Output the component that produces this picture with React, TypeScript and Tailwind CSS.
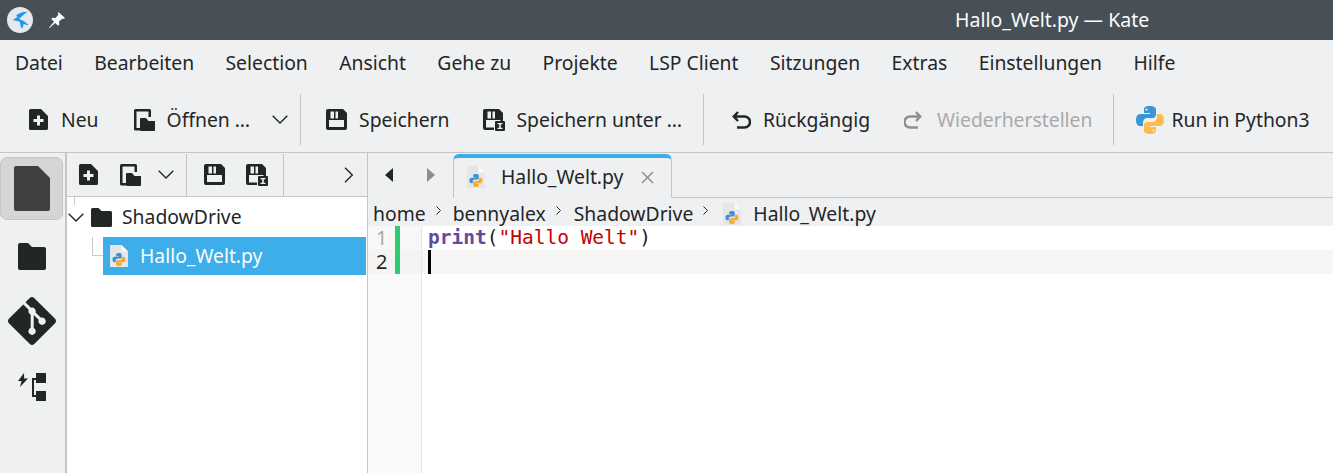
import React from "react";
import { SiGit } from "react-icons/si";

const C = "#232627";

const NewDoc = () => (
  <svg width="19" height="21" viewBox="0 0 19 21" className="shrink-0">
    <path d="M0 1.500A1.500 1.500 0 0 1 1.500 0H12l7 7v12.500a1.500 1.500 0 0 1-1.500 1.500h-16A1.500 1.500 0 0 1 0 19.500z" fill={C} />
    <path d="M8 6.500h3v3.500h3.500v3H11v3.500H8V13H4.500v-3H8z" fill="#eff0f1" />
  </svg>
);
const OpenDoc = () => (
  <svg width="21" height="22" viewBox="0 0 21 22" className="shrink-0">
    <path d="M0 1.500A1.500 1.500 0 0 1 1.500 0h14A1.500 1.500 0 0 1 17 1.500V8h-2.500V2.500H2.500V19H6v2.500H1.500A1.500 1.500 0 0 1 0 20z" fill={C} />
    <path d="M6 10a1 1 0 0 1 1-1h5l2.500 3H21v9a1 1 0 0 1-1 1H7a1 1 0 0 1-1-1z" fill={C} />
  </svg>
);
const Save = () => (
  <svg width="21" height="21" viewBox="0 0 21 21" className="shrink-0">
    <path fillRule="evenodd" d="M0 2A2 2 0 0 1 2 0h15l4 4v15a2 2 0 0 1-2 2H2a2 2 0 0 1-2-2zM3 11v7h15v-7zM4.500 2.500v7h3.500v-7zM9.500 2.500v7h2.500v-7z" fill={C} />
  </svg>
);
const SaveAs = () => (
  <svg width="22" height="22" viewBox="0 0 22 22" className="shrink-0">
    <path fillRule="evenodd" d="M0 2A2 2 0 0 1 2 0h14l4 4v8h-2.500v-1H3v7.500h8V21H2a2 2 0 0 1-2-2zM4.500 2.500v7h3.500v-7zM9.500 2.500v7h2.500v-7z" fill={C} />
    <rect x="12" y="12" width="10" height="10" rx="1" fill={C} />
    <path d="M14.500 14h5v1.300h-1.700v3.400h1.700V20h-5v-1.300h1.700v-3.400h-1.700z" fill="#eff0f1" />
  </svg>
);
const Chevron = ({ dir = "down" }: { dir?: "down" | "right" }) => (
  <svg width={dir === "down" ? 16 : 10} height={dir === "down" ? 9 : 16} viewBox={dir === "down" ? "0 0 16 9" : "0 0 10 16"} className="shrink-0">
    <path d={dir === "down" ? "M.7.7 8 8l7.300-7.300" : "M1 .7 8.300 8 1 15.300"} fill="none" stroke={C} strokeWidth="1.400" />
  </svg>
);
const pyTop = "M13.800 0C8.500 0 8 2.100 8 3.500V7h6v1H4.500C2 8 0 10 0 14c0 4.200 1.900 6 4.300 6H7v-3.600c0-2.300 2-4.400 4.300-4.400h5.400c2 0 3.300-1.500 3.300-3.300V3.500C20 1.500 18 0 13.800 0z";
const pyBot = "M14.200 28c5.300 0 5.800-2.100 5.800-3.500V21h-6v-1h9.500c2.500 0 4.500-2 4.500-6 0-4.200-1.900-6-4.300-6H21v3.600c0 2.300-2 4.400-4.300 4.400h-5.400C9.300 16 8 17.500 8 19.300v5.200C8 26.500 10 28 14.200 28z";
const Python = () => (
  <svg width="28" height="28" viewBox="0 0 28 28" className="shrink-0">
    <path d={pyTop} fill="#3b97d3" />
    <circle cx="10.500" cy="3.500" r="1.100" fill="#eff0f1" />
    <path d={pyBot} fill="#fdbc4b" />
    <circle cx="17.500" cy="24.500" r="1.100" fill="#eff0f1" />
  </svg>
);
const PyFile = () => (
  <svg width="18" height="22" viewBox="0 0 18 22" className="shrink-0">
    <path d="M0 0h11.500L18 6.500V22H0z" fill="#e4e6e8" />
    <path d="M11.500 0 18 6.500h-6.500z" fill="#fafafa" />
    <g transform="translate(2.500 8) scale(.46)">
      <path d={pyTop} fill="#3b8ed0" />
      <path d={pyBot} fill="#f8a825" />
    </g>
  </svg>
);
const Sep = () => <div className="w-px bg-[#c3c5c6] h-[51px] shrink-0" />;
const Crumb = () => (
  <svg width="5" height="9" viewBox="0 0 5 9" className="ml-[10px] mb-[6px] shrink-0">
    <path d="M.5.500 4.500 4.500.5 8.500" fill="none" stroke={C} />
  </svg>
);

const menus = ["Datei", "Bearbeiten", "Selection", "Ansicht", "Gehe zu", "Projekte", "LSP Client", "Sitzungen", "Extras", "Einstellungen", "Hilfe"];

export default function App() {
  return (
    <div className="w-[1333px] h-[473px] overflow-hidden flex flex-col bg-[#eff0f1] text-[#232627] font-['Noto_Sans',sans-serif] text-[19.330px] leading-[28px]">
      {/* title bar */}
      <div className="h-10 shrink-0 bg-[#475057] flex items-center relative">
        <svg width="26" height="26" viewBox="0 0 26 26" className="ml-[7px] shrink-0">
          <circle cx="13" cy="13" r="13" fill="#e6e9eb" />
          <path d="M20.500 4.500C16 5 11 6 9 9l2 1c-3 1-4.500 2.500-5 3.500 3 0 5 .5 7 1.500 0 2 .5 4.500 2 6.500 1-1.500 1.500-2.500 1.500-4.500 1.500.5 3.500 1 5 1-2.500-2.500-5.500-5-9.500-6 3-3 6-5 8.500-7.500z" fill="#1d99f3" />
        </svg>
        <svg width="18" height="18" viewBox="0 0 18 18" className="ml-[15px] shrink-0">
          <path d="M10.500 1 17 7l-1.500 1-1-.5-3.500 3 .3 3-1.300 1.200-2.800-2.800L1.500 17 1 16.500l5-5.700L3.300 8 4.500 6.700l3 .3 3-3.500-.7-1.200z" fill="#fcfcfc" />
        </svg>
        <span className="absolute left-[955px] top-[6px] text-[#fcfcfc] text-[19.500px]">Hallo_Welt.py — Kate</span>
      </div>

      {/* menu */}
      <div className="h-12 shrink-0 flex items-center pl-[15px] gap-[31.400px] pb-[2px]">
        {menus.map((m) => (
          <span key={m} className="whitespace-nowrap">{m}</span>
        ))}
      </div>

      {/* main toolbar */}
      <div className="h-[65px] shrink-0 flex items-center border-b border-[#c3c5c6] pb-[1px] pl-[29px] whitespace-nowrap">
        <NewDoc />
        <span className="ml-[13px]">Neu</span>
        <div className="ml-[35px]"><OpenDoc /></div>
        <span className="ml-[12px]">Öffnen …</span>
        <div className="ml-[22px]"><Chevron /></div>
        <div className="ml-[12px]"><Sep /></div>
        <div className="ml-[25px]"><Save /></div>
        <span className="ml-[12px]">Speichern</span>
        <div className="ml-[34px]"><SaveAs /></div>
        <span className="ml-[11px]">Speichern unter …</span>
        <div className="ml-[21px]"><Sep /></div>
        <svg width="19" height="18" viewBox="0 0 19 18" className="ml-[28px] shrink-0">
          <path d="M6 1 1.800 5.500 6 10M2 5.500h10.500a5 5 0 0 1 0 11H5" fill="none" stroke={C} strokeWidth="2.500" />
        </svg>
        <span className="ml-[12px]">Rückgängig</span>
        <svg width="18" height="18" viewBox="0 0 18 18" className="ml-[34px] shrink-0">
          <path d="M12 1l4.200 4.500L12 10M16 5.500H6a5 5 0 0 0 0 11h8" fill="none" stroke="#8d8f90" strokeWidth="2.500" />
        </svg>
        <span className="ml-[15px] text-[#a8aaab]">Wiederherstellen</span>
        <div className="ml-[21px]"><Sep /></div>
        <div className="ml-[22px]"><Python /></div>
        <span className="ml-[7px]">Run in Python3</span>
      </div>

      {/* body */}
      <div className="flex-1 flex min-h-0">
        {/* sidebar */}
        <div className="w-[67px] shrink-0 border-r-2 border-[#c3c5c6] flex flex-col items-center">
          <div className="w-[63px] h-[63px] mt-[4px] mr-[3px] rounded-[7px] bg-[#d3d5d6] border border-[#c3c5c6] flex items-center justify-center pl-[2px]">
            <svg width="36" height="45" viewBox="0 0 36 45">
              <path d="M0 2a2 2 0 0 1 2-2h22l12 12v31a2 2 0 0 1-2 2H2a2 2 0 0 1-2-2z" fill="#3f4041" />
            </svg>
          </div>
          <svg width="28" height="27" viewBox="0 0 28 27" className="mt-[23px] mr-[1px]">
            <path d="M0 2a2 2 0 0 1 2-2h8l4 4h12a2 2 0 0 1 2 2v19a2 2 0 0 1-2 2H2a2 2 0 0 1-2-2z" fill={C} />
          </svg>
          <SiGit size={48} color={C} className="mt-[27px] mr-[1px]" />
          <svg width="28" height="28" viewBox="0 0 28 28" className="mt-[28px] mr-[1px]">
            <path d="M6 0 0 8h3.500L2 14l8-8.500H6.200z" fill={C} />
            <rect x="18" y="0" width="10" height="10" fill={C} />
            <rect x="18" y="18" width="10" height="10" fill={C} />
            <path d="M18 6h-3v17h3" fill="none" stroke={C} strokeWidth="2" />
          </svg>
        </div>

        {/* file panel */}
        <div className="w-[301px] shrink-0 border-r border-[#c3c5c6] flex flex-col">
          <div className="h-[44px] shrink-0 border-b border-[#c3c5c6] flex items-center pl-[12px]">
            <NewDoc />
            <div className="ml-[22px]"><OpenDoc /></div>
            <div className="ml-[17px]"><Chevron /></div>
            <div className="ml-[12px] w-px h-[42px] bg-[#c3c5c6]" />
            <div className="ml-[17px]"><Save /></div>
            <div className="ml-[21px]"><SaveAs /></div>
            <div className="ml-[15px] w-px h-[42px] bg-[#c3c5c6]" />
            <div className="ml-[60px]"><Chevron dir="right" /></div>
          </div>
          <div className="flex-1 bg-white relative">
            <div className="h-[40px] flex items-center pl-[1px]">
              <Chevron />
              <svg width="21" height="19" viewBox="0 0 21 19" className="ml-[7px] shrink-0">
                <path d="M0 1.500A1.500 1.500 0 0 1 1.500 0h6l3 3h9A1.500 1.500 0 0 1 21 4.500V17.500a1.500 1.500 0 0 1-1.500 1.500h-18A1.500 1.500 0 0 1 0 17.500z" fill={C} />
              </svg>
              <span className="ml-[10px]">ShadowDrive</span>
            </div>
            <div className="ml-[36px] h-[38px] w-[263px] bg-[#3daee9] flex items-center pl-[7px] text-[#fcfcfc]">
              <PyFile />
              <span className="ml-[12px]">Hallo_Welt.py</span>
            </div>
            <div className="absolute left-[25px] top-[40px] w-[11px] h-[19px] border-l border-b border-[#c9cbcc]" />
            <div className="absolute left-[7px] top-0 w-px h-[8px] bg-[#c9cbcc]" />
          </div>
        </div>

        {/* editor */}
        <div className="flex-1 flex flex-col min-w-0">
          <div className="h-[45px] shrink-0 flex pt-[1px]">
            <div className="w-[85px] flex items-center pl-[17px] gap-[34px] shrink-0 pb-[3px]">
              <svg width="8" height="14" viewBox="0 0 8 14"><path d="M8 0v14L0 7z" fill={C} /></svg>
              <svg width="8" height="14" viewBox="0 0 8 14"><path d="M0 0v14l8-7z" fill="#8b8d8e" /></svg>
            </div>
            <div className="w-[219px] h-[44px] border-x border-[#c3c5c6] rounded-t-[6px] border-t-[4px] border-t-[#3daee9] flex items-center pl-[13px] pb-[2px] shrink-0">
              <PyFile />
              <span className="ml-[16px]">Hallo_Welt.py</span>
              <svg width="13" height="13" viewBox="0 0 13 13" className="ml-[18px] shrink-0">
                <path d="M1 1l11 11M12 1 1 12" stroke="#8d8f90" strokeWidth="1.500" />
              </svg>
            </div>
            <div className="flex-1 h-[44px] border-b border-[#c3c5c6]" />
          </div>
          <div className="h-[28px] shrink-0 flex items-center pl-[5px] whitespace-nowrap pt-[3px]">
            <span>home</span>
            <Crumb />
            <span className="ml-[12px]">bennyalex</span>
            <Crumb />
            <span className="ml-[13px]">ShadowDrive</span>
            <Crumb />
            <div className="ml-[15px]"><PyFile /></div>
            <span className="ml-[12px]">Hallo_Welt.py</span>
          </div>
          <div className="flex-1 bg-white flex min-h-0 font-['DejaVu_Sans_Mono',monospace] text-[19.500px] leading-[24px]">
            <div className="w-[54px] shrink-0 bg-[#fafafa] border-r border-[#e6e6e6] flex">
              <div className="w-[27px] shrink-0 flex flex-col h-[48px] font-['Noto_Sans',sans-serif] text-[20px]">
                <div className="h-[24px] bg-[#f8f7f6] pl-[8px] text-[#a9a8a7]">1</div>
                <div className="h-[24px] bg-[#f5f4f2] pl-[8px] text-[#232627]">2</div>
              </div>
              <div className="w-[5px] h-[48px] bg-[#2ecc71] shrink-0" />
              <div className="flex-1 flex flex-col h-[48px]">
                <div className="h-[24px] bg-[#f8f7f6]" />
                <div className="h-[24px] bg-[#f5f4f2]" />
              </div>
            </div>
            <div className="flex-1 flex flex-col">
              <div className="h-[24px] pl-[6px] whitespace-pre">
                <span className="text-[#644a9b] font-bold">print</span>
                <span className="text-[#1f1c1b]">(</span>
                <span className="text-[#bf0303]">"Hallo Welt"</span>
                <span className="text-[#1f1c1b]">)</span>
              </div>
              <div className="h-[24px] bg-[#f7f6f4] pl-[6px]">
                <div className="w-[3px] h-[24px] bg-black" />
              </div>
            </div>
          </div>
        </div>
      </div>
    </div>
  );
}
